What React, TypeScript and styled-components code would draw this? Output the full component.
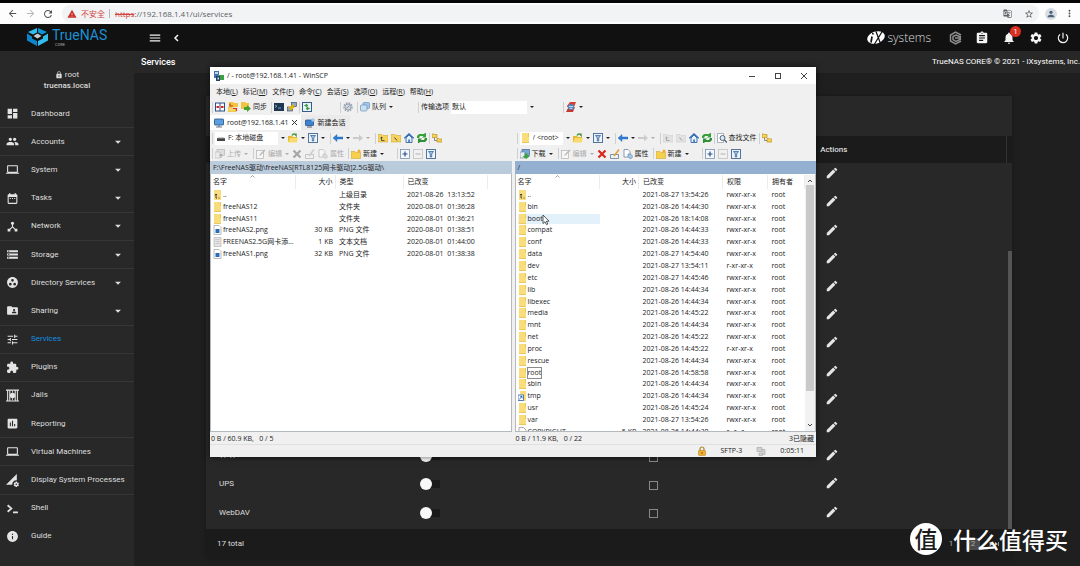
import React from "react";
import styled, { createGlobalStyle, css } from "styled-components";
import {
  MdArrowBack, MdArrowForward, MdRefresh, MdWarning, MdGTranslate, MdStarBorder, MdPerson, MdMoreVert,
  MdDashboard, MdPeople, MdLaptop, MdDateRange, MdDeviceHub, MdStorage, MdGroupWork, MdFolderShared,
  MdTune, MdExtension, MdAssessment, MdPermDataSetting, MdInfo, MdMenu, MdAssignment,
  MdNotifications, MdSettings, MdPowerSettingsNew, MdEdit, MdLock, MdArrowDropDown, MdPlayArrow, MdSkipNext,
} from "react-icons/md";

const ui = `"Open Sans", "Noto Sans CJK SC", sans-serif`;
const web = `Roboto, "Noto Sans CJK SC", sans-serif`;

const Global = createGlobalStyle`
  * { box-sizing: border-box; }
  body { margin: 0; background: #1f1f1f; font-family: ${web}; overflow: hidden; }
  button, input, select { font: inherit; color: inherit; margin: 0; padding: 0; border: 0; background: none; }
  svg { display: block; flex: none; }
  a { color: inherit; text-decoration: none; }
  table { border-collapse: collapse; border-spacing: 0; }
  td, th { padding: 0; font-weight: 400; text-align: left; }
`;

const App_ = styled.div`
  position: relative;
  display: flex;
  flex-direction: column;
  min-height: 100vh;
`;

/* ---------- browser bar ---------- */

const BrowserBar = styled.header`
  display: flex;
  align-items: center;
  gap: 6px;
  height: 24px;
  padding: 0 5px 0 6px;
  border-top: 3px solid #050505;
  background: #fdfdfd;
  color: #50555a;
`;
const NavButton = styled.button<{ $off?: boolean }>`
  display: flex;
  justify-content: center;
  width: 12px;
  color: ${(p) => (p.$off ? "#b4b7ba" : "#505458")};
`;
const AddressBar = styled.div`
  display: flex;
  align-items: center;
  flex: 1;
  gap: 4px;
  height: 17px;
  margin-left: 2px;
  padding: 0 5px;
  border-radius: 8px;
  background: #f1f3f4;
  font: 8px/12px ${ui};
  color: #5d6165;
`;
const Unsafe = styled.span`
  color: #d3453c;
`;
const Divider = styled.span`
  width: 1px;
  height: 9px;
  background: #b5b7b9;
`;
const Url = styled.span`
  flex: 1;
  margin-left: 1px;
  s { color: #d3453c; }
`;
const Profile = styled.button`
  display: flex;
  justify-content: center;
  align-items: center;
  width: 12px;
  height: 12px;
  border-radius: 6px;
  background: #d9dee5;
  color: #4b6078;
`;

/* ---------- TrueNAS shell ---------- */

const TopBar = styled.div`
  display: flex;
  align-items: center;
  justify-content: space-between;
  height: 27px;
  padding: 0 10px 0 27px;
  background: #111;
  color: #f4f4f4;
`;
const Cluster = styled.div<{ $gap: number }>`
  display: flex;
  align-items: center;
  gap: ${(p) => p.$gap}px;
`;
const Brand = styled.a`
  display: flex;
  gap: 4px;
  width: 114px;
  color: #1b90d2;
`;
const BrandText = styled.span`
  display: flex;
  flex-direction: column;
  font: 14px/15px ${web};
  small { font: 4px/4px ${web}; color: #aaa; padding-left: 3px; }
`;
const BarButton = styled.button`
  position: relative;
  display: flex;
  justify-content: center;
  width: 14px;
`;
const Badge = styled.span`
  position: absolute;
  top: -5px;
  right: -5px;
  width: 11px;
  border-radius: 6px;
  background: #dc2f24;
  font: 8px/11px ${web};
  text-align: center;
`;
const Vendor = styled.a`
  display: flex;
  align-items: center;
  gap: 2px;
  margin-right: 4px;
  font: 300 12px/14px "Open Sans", sans-serif;
  color: #ddd;
`;
const Body = styled.div`
  display: flex;
  flex: 1;
`;
const Sidebar = styled.aside`
  width: 134px;
  flex: none;
  background: #282828;
  color: #dcdcdc;
`;
const Account = styled.div`
  display: flex;
  flex-direction: column;
  align-items: center;
  height: 49px;
  padding-top: 18px;
  font: 8px/11px ${web};
  span { display: flex; align-items: center; gap: 2px; }
  b { font-weight: 500; }
`;
const Menu = styled.nav`
  display: flex;
  flex-direction: column;
  height: 451px;
`;
const MenuItem = styled.a<{ $active?: boolean; $line?: boolean }>`
  display: flex;
  flex: 1;
  align-items: center;
  padding: 0 9px 0 6px;
  border-bottom: 1px solid ${(p) => (p.$line ? "#363636" : "transparent")};
  font: 400 8px/10px ${web};
  color: ${(p) => (p.$active ? "#1190e0" : "#dedede")};
  > svg:first-child { width: 13px; height: 13px; margin-right: 12px; color: #e4e4e4; }
  > span { flex: 1; white-space: nowrap; }
`;
const Main = styled.main`
  flex: 1;
  min-width: 0;
  background: #1f1f1f;
  color: #dedede;
`;
const PageHead = styled.div`
  display: flex;
  align-items: center;
  justify-content: space-between;
  height: 22px;
  padding-left: 7px;
  background: #272727;
  font: 400 8px/12px ${web};
  color: #fff;
  h1 { margin: 0; font: 500 9px/12px ${web}; }
`;
const Card = styled.section`
  position: relative;
  margin: 23px 68px 8px 72px;
  padding-top: 40px;
  background: #282828;
  box-shadow: 0 0 4px #181818;
`;
const ServiceScroll = styled.div`
  height: 393px;
  overflow: hidden;
`;
const ServiceTable = styled.table`
  width: 100%;
  height: 390px;
  table-layout: fixed;
  font: 400 8px/12px ${web};
  thead th { height: 27px; background: #1b1b1b; font-weight: 500; }
  thead th:last-child { border-left: 1px solid #333; }
  tbody td { height: 28px; vertical-align: middle; }
  tbody tr:first-child td { height: 24px; }
  tbody tr:first-child td button { margin-bottom: 4px; }
  td:first-child { padding: 2px 0 0 13px; }
  td:nth-child(2) { padding-top: 2px; }
  td:nth-child(4) { padding-left: 5px; }
`;
const Toggle = styled.input`
  appearance: none;
  display: block;
  position: relative;
  width: 20px;
  height: 12px;
  background: linear-gradient(#1a1a1a, #1a1a1a) 6px 2px / 14px 8px no-repeat;
  &::before {
    content: "";
    display: block;
    width: 12px;
    height: 12px;
    border-radius: 6px;
    background: #f8f8f8;
  }
`;
const Check = styled.input`
  appearance: none;
  display: block;
  width: 9px;
  height: 9px;
  margin-top: 4px;
  border: 1px solid #888;
`;
const EditButton = styled.button`
  display: block;
  color: #e6e6e6;
`;
const ScrollThumb = styled.div`
  position: absolute;
  right: 0;
  top: 155px;
  bottom: 29px;
  width: 4px;
  background: #555;
`;
const CardFoot = styled.footer`
  display: flex;
  align-items: center;
  justify-content: space-between;
  height: 29px;
  padding: 0 12px 0 11px;
  background: #1b1b1b;
  font: 8px/12px ${web};
`;
const PageButton = styled.button<{ $on?: boolean }>`
  width: 14px;
  height: 12px;
  background: ${(p) => (p.$on ? "#4a4a4a" : "none")};
  color: #aaa;
`;
const StepButton = styled.button`
  display: flex;
  justify-content: center;
  width: 6px;
  color: #ccc;
`;

/* ---------- WinSCP window ---------- */

const Window = styled.section`
  position: absolute;
  left: 210px;
  top: 67px;
  width: 606px;
  background: #f0f0f0;
  box-shadow: 0 0 6px #0009;
  font: 7px/10px ${ui};
  color: #222;
`;
const TitleBar = styled.div`
  display: flex;
  align-items: center;
  gap: 3px;
  height: 17px;
  padding: 0 4px;
  background: #fff;
  span { flex: 1; }
`;
const SysButton = styled.button`
  display: flex;
  justify-content: center;
  width: 16px;
  margin-left: 7px;
`;
const MenuBar = styled.div`
  display: flex;
  align-items: center;
  gap: 5px;
  height: 15px;
  padding-left: 6px;
  button { white-space: nowrap; }
`;
const ToolRow = styled.div<{ $h: number }>`
  display: flex;
  align-items: center;
  height: ${(p) => p.$h}px;
`;
const Icons = styled.div`
  display: flex;
  align-items: center;
  gap: 3px;
`;
const Tool = styled.button<{ $off?: boolean }>`
  display: flex;
  align-items: center;
  gap: 2px;
  flex: none;
  white-space: nowrap;
  ${(p) => p.$off && css`color: #aaa; svg { filter: grayscale(1); opacity: 0.45; }`}
`;
const Caret = styled.button<{ $off?: boolean }>`
  display: flex;
  align-items: center;
  justify-content: center;
  width: 10px;
  height: 10px;
  flex: none;
  &::before {
    content: "";
    border: 2px solid transparent;
    border-top-color: ${(p) => (p.$off ? "#aaa" : "#222")};
    border-bottom: 0;
  }
`;
const Sep = styled.i`
  width: 1px;
  height: 11px;
  margin: 0 2px;
  flex: none;
  background: #cfcfcf;
`;
const Space = styled.i<{ $w: number }>`
  width: ${(p) => p.$w}px;
  flex: none;
`;
const Combo = styled.label<{ $w: number }>`
  display: flex;
  align-items: center;
  gap: 2px;
  width: ${(p) => p.$w}px;
  height: 13px;
  padding-left: 1px;
  background: #fff;
  select { appearance: none; flex: 1; min-width: 0; }
`;
const Tabs = styled.div`
  display: flex;
  align-items: stretch;
  height: 15px;
`;
const Tab = styled.button<{ $on?: boolean }>`
  display: flex;
  align-items: center;
  gap: 3px;
  padding: 0 4px;
  background: ${(p) => (p.$on ? "#fff" : "#ebebeb")};
`;
const Panes = styled.div`
  display: flex;
  gap: 3px;
`;
const Pane = styled.section`
  flex: 1;
  min-width: 0;
`;
const PathBar = styled.div<{ $on?: boolean }>`
  height: 13px;
  padding: 0 3px;
  background: ${(p) => (p.$on ? "#94b0d0" : "#bacbdc")};
  line-height: 13px;
  white-space: nowrap;
`;
const ListBox = styled.div`
  display: flex;
  height: 258px;
  padding-top: 1px;
  overflow: hidden;
  border: 1px solid #b4b9be;
  border-top: 0;
  background: #fff;
`;
const FileTable = styled.table<{ $h: number }>`
  width: 100%;
  height: ${(p) => p.$h}px;
  table-layout: fixed;
  white-space: pre;
  line-height: 10px;
  thead th { height: 14px; border-right: 1px solid #ececec; }
  tbody td { height: 11px; }
  th:first-child, td:first-child { padding-left: 2px; }
  th:nth-child(2), td:nth-child(2) { text-align: right; padding-right: 2px; }
  th:nth-child(n + 3), td:nth-child(n + 3) { padding-left: 4px; }
`;
const SortHead = styled.th`
  position: relative;
  svg { position: absolute; left: 39px; top: 0; }
`;
const FileName = styled.span<{ $hot?: boolean }>`
  display: flex;
  align-items: center;
  background: ${(p) => (p.$hot ? "#e3f1fb" : "none")};
`;
const Label = styled.span<{ $focus?: boolean }>`
  outline: ${(p) => (p.$focus ? "1px solid #8a8a8a" : "none")};
`;
const PaneScroll = styled.div`
  display: flex;
  flex-direction: column;
  align-items: center;
  width: 10px;
  padding: 4px 1px;
  background: #f2f2f2;
  flex: none;
  i { width: 8px; height: 206px; margin: 2px 0 auto; background: #c9c9c9; }
`;
const StatusLine = styled.div`
  display: flex;
  justify-content: space-between;
  height: 12px;
  padding: 0 2px 0 1px;
  line-height: 13px;
  white-space: pre;
`;
const StatusBar = styled.footer`
  display: flex;
  align-items: center;
  justify-content: flex-end;
  height: 13px;
  padding-right: 12px;
  border-top: 1px solid #e0e0e0;
  gap: 14px;
`;
const Pointer = styled.svg`
  position: absolute;
  left: 332px;
  top: 147px;
`;
const Watermark = styled.div`
  position: absolute;
  right: 12px;
  bottom: 11px;
  display: flex;
  align-items: center;
  gap: 11px;
  color: #fff;
  font: 500 23px/32px "Noto Sans CJK SC", sans-serif;
  b {
    width: 32px;
    height: 32px;
    border-radius: 16px;
    background: #fff;
    color: #1c1c1c;
    font-size: 23px;
    font-weight: 500;
    line-height: 31px;
    text-align: center;
  }
`;

/* ---------- drawings ---------- */

const shapes: Record<string, React.ReactNode> = {
  panes: <><rect x="0.5" y="1" width="9" height="8" fill="#fff" stroke="#2b4f8c" /><path d="M5 1v8" stroke="#2b4f8c" /><path d="M1.5 5h2.5M6 5h2.5" stroke="#d22" strokeWidth="2" /></>,
  folderSync: <><path d="M1 0h4l1 1h4v4H1z" fill="#f2c63c" /><path d="M0 5h3l1 1h4v4H0z" fill="#f8d662" stroke="#c59a20" strokeWidth=".4" /><path d="M5 4H2V1.500M5 6.500h3.500V9" stroke="#d43a22" strokeWidth="1.200" fill="none" /></>,
  folderGreen: <><path d="M0 0h4l1 1h3v6H0z" fill="#f2c63c" /><path d="M3 5h3V3l4 3.500L6 10V8H3z" fill="#46a036" /></>,
  terminal: <><rect x="0" y="1" width="10" height="8" fill="#1f3550" /><path d="M1 3l2 1.200L1 5.500M4 6h3" stroke="#8fc2ea" fill="none" strokeWidth=".8" /></>,
  putty: <><rect x="4.500" y="0.500" width="5" height="4" fill="#8ea6c0" stroke="#345" strokeWidth=".6" /><rect x=".5" y="5" width="5" height="4" fill="#8ea6c0" stroke="#345" strokeWidth=".6" /><path d="M7 3L3 5.500h3L3 8" stroke="#e8b800" fill="none" strokeWidth="1.600" /></>,
  compare: <><rect x=".5" y=".5" width="9" height="9" fill="#e8f2fa" stroke="#345c8c" /><path d="M2 3.500h2M4 2l2 1.500L4 5zM8 6.500H6M6 5L4 6.500 6 8z" stroke="#3a9a3a" strokeWidth=".8" fill="#3a9a3a" /></>,
  gear: <><circle cx="5" cy="5" r="4" fill="none" stroke="#9aa6b4" strokeWidth="1.600" strokeDasharray="1.600 1.100" /><circle cx="5" cy="5" r="3" fill="#d4dae2" stroke="#8492a4" strokeWidth=".8" /><path d="M3.500 6.500l3-3" stroke="#8492a4" /></>,
  stack: <><rect x="3" y=".5" width="6.500" height="6" rx="1" fill="#a0c6e8" stroke="#6a94bc" strokeWidth=".7" /><rect x=".5" y="3" width="6.500" height="6" rx="1" fill="#c8dff2" stroke="#6a94bc" strokeWidth=".7" /></>,
  transfer: <><path d="M1 4l3-4h6L8 5H1z" fill="#d43f32" /><path d="M9 5L7 10H0l2-4z" fill="#c43a30" /><circle cx="5" cy="5" r="3" fill="#4a86c4" /><path d="M3 4.500h4M3.500 6.300h3" stroke="#e8eef4" strokeWidth=".8" /></>,
  monitor: <><rect x=".5" y="1" width="9" height="6" rx=".6" fill="#5a9ee4" stroke="#28507e" strokeWidth=".8" /><path d="M2 9h6M5 7v2" stroke="#68788a" strokeWidth="1.200" /></>,
  monitorNew: <><rect x=".5" y="2" width="8" height="5.500" rx=".6" fill="#3b82d0" stroke="#28507e" strokeWidth=".8" /><path d="M2 9h5" stroke="#68788a" strokeWidth="1.200" /><circle cx="8" cy="2" r="1.800" fill="#9cc8ee" /></>,
  drive: <><path d="M1 5h8v3H1z" fill="#444" /><path d="M2 4.500h6l1 1H1z" fill="#999" /></>,
  folderOpen: <><path d="M0 3h4l1 1h4v5H0z" fill="#e8b832" /><path d="M2 5h8L8.500 9.500H0z" fill="#f9da6c" /><path d="M4 2.500C5 .5 7 .5 8 2V.5M8 2v1" stroke="#4a9a3a" strokeWidth="1.500" fill="none" /></>,
  filter: <><rect x=".5" y=".5" width="9" height="9" fill="#eef4fa" stroke="#54749c" /><path d="M2.500 2.500h5L5.700 5v3H4.300V5z" fill="#9cc0e4" stroke="#2c5a94" strokeWidth=".7" /></>,
  back: <path d="M0 5l4-3.500V4h6v2H4v2.500z" fill="#2f7fd6" stroke="#1a5cab" strokeWidth=".4" />,
  forward: <path d="M10 5L6 1.500V4H0v2h6v2.500z" fill="#8aa4c0" />,
  folderUp: <><path d="M0 1.500h4l1 1h5V9H0z" fill="#f6d35c" stroke="#c39a28" strokeWidth=".5" /><path d="M6.500 7.500h-3V4M2.300 5.200L3.500 4 4.700 5.200" stroke="#334" strokeWidth=".8" fill="none" /></>,
  folderRoot: <><path d="M0 1.500h4l1 1h5V9H0z" fill="#f6d35c" stroke="#c39a28" strokeWidth=".5" /><path d="M3.500 4.500L6 7.500" stroke="#334" strokeWidth=".9" /></>,
  home: <><path d="M2 5v4.500h6V5L5 2z" fill="#e4f0fa" stroke="#3568a8" strokeWidth=".9" /><path d="M.3 5.300L5 .8l4.700 4.500" stroke="#2c66b4" strokeWidth="1.200" fill="none" /><path d="M4.300 6.500h1.500v3H4.300z" fill="#3568a8" /></>,
  refresh: <><path d="M0 5V3l2-2h5l1-1h1v4.500H5L6.500 3H3L2 5z" fill="#3aa23a" /><path d="M10 5v2L8 9H3l-1 1H1V5.500h4L3.500 7H7l1-2z" fill="#2f8f34" /></>,
  tree: <><path d="M0 1h2l.5.500H5V4.500H0zM5 5.500h2l.5.500H10V9H5z" fill="#f6d35c" stroke="#c39a28" strokeWidth=".8" /><path d="M2.500 5v2.500H5" stroke="#888" fill="none" /></>,
  upload: <><rect x="2" y=".5" width="7.500" height="6" fill="#b8cce0" stroke="#5878a0" strokeWidth=".7" /><path d="M0 3h5v6H0z" fill="#dce6f0" stroke="#5878a0" strokeWidth=".6" /><path d="M6 5v4M4.500 7l1.500-2 1.500 2" stroke="#555" fill="none" /></>,
  download: <><rect x="2" y=".5" width="7.500" height="6" fill="#7aa6d4" stroke="#406898" strokeWidth=".7" /><path d="M0 3h5v6H0z" fill="#e8eef4" stroke="#5878a0" strokeWidth=".6" /><path d="M4.500 4.500h3V7H10L6.200 10 2.500 7h2z" fill="#3aa23a" /></>,
  edit: <><rect x=".5" y="1.500" width="7" height="8" fill="#fff" stroke="#667" strokeWidth=".7" /><path d="M3 7l1-2 4.500-4.500 1 1L5 6z" fill="#777" /></>,
  cross: <path d="M1.500 1.500l7 7M8.500 1.500l-7 7" stroke="#d8281c" strokeWidth="2.200" />,
  rename: <><path d="M.5 5.500h8v4h-8z" fill="#eef2f6" stroke="#667c94" strokeWidth=".8" /><path d="M4 7l5-6.500" stroke="#e0a030" strokeWidth="1.500" /></>,
  props: <><path d="M1 .5h4L7 2.500V8H1z" fill="#fff" stroke="#6b84a4" strokeWidth=".8" /><path d="M5 5h2.500L10 7.500 7.500 10 5 7.500z" fill="#a8c8e4" stroke="#4878a8" strokeWidth=".6" /></>,
  newFolder: <><path d="M0 2.500h4l1 1h4.500V9.500H0z" fill="#f6cf4c" stroke="#c39a28" strokeWidth=".5" /><circle cx="8" cy="2" r="1.600" fill="#f8a830" /></>,
  plus: <><rect x=".5" y=".5" width="9" height="9" fill="#f4f8fc" stroke="#7890ac" strokeWidth=".8" /><path d="M5 2.500v5M2.500 5h5" stroke="#28508c" strokeWidth="1.200" /></>,
  minus: <><rect x=".5" y=".5" width="9" height="9" fill="#f4f4f4" stroke="#888" strokeWidth=".8" /><path d="M2.500 5h5" stroke="#666" /></>,
  find: <><path d="M.5.500h6v9h-6z" fill="#fff" stroke="#8894a4" strokeWidth=".7" /><circle cx="5.500" cy="5" r="2.500" fill="#d8e8f6" stroke="#456" strokeWidth=".9" /><path d="M7.500 7L10 9.500" stroke="#456" strokeWidth="1.200" /></>,
  folder: <><path d="M1 0h7v10H1z" fill="#f9dc7c" /><path d="M7 0h1v4H7zM1 9h7v1H1z" fill="#ecc75c" /></>,
  parent: <><path d="M1 0h7v10H1z" fill="#f9dc7c" /><path d="M3 4v4h1M2 5.200L3 4l1 1.200M5.500 8h1" stroke="#333" strokeWidth=".9" fill="none" /></>,
  link: <><path d="M2 0h6v10H2z" fill="#f9dc7c" /><rect x="0" y="4" width="5.500" height="5.500" fill="#fff" stroke="#2463b4" strokeWidth=".8" /><path d="M1.200 8.300L4 5.500M2.300 5.500H4v1.800" stroke="#2463b4" strokeWidth=".9" fill="none" /></>,
  image: <><path d="M1 .5h5L8 2.500v7H1z" fill="#fff" stroke="#8a9098" strokeWidth=".6" /><rect x="2.500" y="4" width="4" height="4" fill="#2b6cb8" /></>,
  text: <><path d="M1 .5h7v9H1z" fill="#e4e4e4" stroke="#aaa" strokeWidth=".6" /><path d="M2.500 2.500h4M2.500 4.500h4M2.500 6.500h4" stroke="#bbb" strokeWidth=".7" /></>,
  file: <path d="M1 .5h4.500L8 3v7H1z" fill="#fff" stroke="#888" strokeWidth=".7" />,
  winscp: <><rect x="0" y="0" width="5" height="7" fill="#4472a8" /><rect x="1" y="1" width="3" height="2" fill="#bcd8f0" /><rect x="4" y="4" width="6" height="5" fill="#3da046" /><path d="M2 5h4v5H2z" fill="#23406c" /><path d="M3.500 6.500h1.500v2H3.500z" fill="#dde" /></>,
  lock: <><path d="M3 5V3a2 2 0 014 0v2" stroke="#a88428" fill="none" strokeWidth="1.200" /><rect x="1.500" y="4.500" width="7" height="5" rx=".8" fill="#f0b030" stroke="#b07c10" strokeWidth=".5" /><circle cx="5" cy="7" r=".8" fill="#7a5408" /></>,
  zip: <path d="M1 1.500h5v4H1zM5 3.500h4v5H6.500M3 7h3.500v2.500H3z" fill="#d0d0d0" stroke="#aaa" strokeWidth=".7" />,
};
const Ico = ({ n }: { n: string }) => (
  <svg width="10" height="10" viewBox="0 0 10 10" aria-hidden="true">{shapes[n]}</svg>
);

const TrueNasMark = () => (
  <svg width="21" height="18" viewBox="0 0 42 36" aria-hidden="true">
    <path d="M20 0v9l-8 4L2 8z" fill="#31beec" />
    <path d="M22 0v9l8 4 10-5z" fill="#0d95d5" />
    <path d="M21 11l8 5-8 5-8-5z" fill="#c9cdd0" />
    <path d="M0 11l10 6v4l10 5v10L0 25z" fill="#0d85cb" />
    <path d="M42 11l-10 6v4l-10 5v10l20-11z" fill="#31beec" />
  </svg>
);
const IxMark = () => (
  <svg width="19" height="15" viewBox="0 0 38 30" aria-hidden="true">
    <ellipse cx="18" cy="15" rx="18" ry="12" fill="#fff" transform="rotate(-18 18 15)" />
    <path d="M10 13l-2 12M12 6l-.5 3" stroke="#111" strokeWidth="3.500" />
    <path d="M18 3l9 24M31 2L15 28" stroke="#111" strokeWidth="2.500" />
  </svg>
);
const TrueCommandMark = () => (
  <svg width="13" height="14" viewBox="0 0 26 28" fill="none" stroke="#8d8d8d" strokeWidth="3" aria-hidden="true">
    <path d="M24 8L13 2 3 8v12l10 6 11-6" />
    <path d="M24 12l-10-4-6 3v6l6 4 10-5M12 14h12" />
  </svg>
);
const JailIcon = () => (
  <svg viewBox="0 0 24 24" aria-hidden="true">
    <path d="M0 2h24M0 22h24M3 2v20M21 2v20M7 3v18M17 3v18" stroke="#e4e4e4" strokeWidth="2" />
    <circle cx="12" cy="12" r="5" fill="#e4e4e4" />
    <path d="M12 3v4M12 17v4" stroke="#e4e4e4" strokeWidth="1.500" />
  </svg>
);
const ShellIcon = () => (
  <svg viewBox="0 0 24 24" fill="none" stroke="#e4e4e4" strokeWidth="3.200" aria-hidden="true">
    <path d="M3 6l7 6-7 6M13 19h9" />
  </svg>
);

/* ---------- data ---------- */

const menu: { name: string; icon: React.ReactNode; sub?: boolean; line?: boolean }[] = [
  { name: "Dashboard", icon: <MdDashboard />, line: true },
  { name: "Accounts", icon: <MdPeople />, sub: true, line: true },
  { name: "System", icon: <MdLaptop />, sub: true },
  { name: "Tasks", icon: <MdDateRange />, sub: true, line: true },
  { name: "Network", icon: <MdDeviceHub />, sub: true, line: true },
  { name: "Storage", icon: <MdStorage />, sub: true, line: true },
  { name: "Directory Services", icon: <MdGroupWork />, sub: true },
  { name: "Sharing", icon: <MdFolderShared />, sub: true, line: true },
  { name: "Services", icon: <MdTune />, line: true },
  { name: "Plugins", icon: <MdExtension />, line: true },
  { name: "Jails", icon: <JailIcon /> },
  { name: "Reporting", icon: <MdAssessment />, line: true },
  { name: "Virtual Machines", icon: <MdLaptop />, line: true },
  { name: "Display System Processes", icon: <MdPermDataSetting />, line: true },
  { name: "Shell", icon: <ShellIcon /> },
  { name: "Guide", icon: <MdInfo /> },
];

const services = [...Array(10).fill(""), "TFTP", "UPS", "WebDAV"];

const localFiles = [
  ["parent", "..", "", "上级目录", "2021-08-26  13:13:52"],
  ["folder", "freeNAS12", "", "文件夹", "2020-08-01  01:36:28"],
  ["folder", "freeNAS11", "", "文件夹", "2020-08-01  01:36:21"],
  ["image", "freeNAS2.png", "30 KB", "PNG 文件", "2020-08-01  01:38:51"],
  ["text", "FREENAS2.5G网卡添...", "1 KB", "文本文档", "2020-08-01  01:44:00"],
  ["image", "freeNAS1.png", "32 KB", "PNG 文件", "2020-08-01  01:38:38"],
];

const rx = "rwxr-xr-x";
const remoteFiles = [
  ["parent", "..", "", "2021-08-27 13:54:26", rx],
  ["folder", "bin", "", "2021-08-26 14:44:30", rx],
  ["folder", "boot", "", "2021-08-26 18:14:08", rx],
  ["folder", "compat", "", "2021-08-26 14:44:33", rx],
  ["folder", "conf", "", "2021-08-26 14:44:33", rx],
  ["folder", "data", "", "2021-08-27 14:54:40", rx],
  ["folder", "dev", "", "2021-08-27 13:54:11", "r-xr-xr-x"],
  ["folder", "etc", "", "2021-08-27 14:45:46", rx],
  ["folder", "lib", "", "2021-08-26 14:44:34", rx],
  ["folder", "libexec", "", "2021-08-26 14:44:34", rx],
  ["folder", "media", "", "2021-08-26 14:45:22", rx],
  ["folder", "mnt", "", "2021-08-26 14:44:34", rx],
  ["folder", "net", "", "2021-08-26 14:45:22", rx],
  ["folder", "proc", "", "2021-08-26 14:45:22", "r-xr-xr-x"],
  ["folder", "rescue", "", "2021-08-26 14:44:34", rx],
  ["folder", "root", "", "2021-08-26 14:58:58", rx],
  ["folder", "sbin", "", "2021-08-26 14:44:34", rx],
  ["link", "tmp", "", "2021-08-26 14:44:34", rx],
  ["folder", "usr", "", "2021-08-26 14:45:24", rx],
  ["folder", "var", "", "2021-08-27 13:54:26", rx],
  ["file", "COPYRIGHT", "5 KB", "2021-08-26 14:44:30", "r--r--r--"],
];

const menus: [string, string][] = [
  ["本地", "L"], ["标记", "M"], ["文件", "F"], ["命令", "C"], ["会话", "S"], ["选项", "O"], ["远程", "R"], ["帮助", "H"],
];

const IconTool = ({ n, off, label }: { n: string; off?: boolean; label: string }) => (
  <Tool $off={off} aria-label={label}><Ico n={n} /></Tool>
);

const PaneTools = ({ remote }: { remote?: boolean }) => (
  <>
    <ToolRow $h={16}>
      <Sep />
      <Combo $w={remote ? 43 : 63}>
        <Ico n={remote ? "folder" : "drive"} />
        <select aria-label="目录">
          <option>{remote ? "/ <root>" : "F: 本地磁盘"}</option>
        </select>
      </Combo>
      <Caret aria-label="目录列表" />
      <IconTool n="folderOpen" label="打开目录" />
      <Caret aria-label="书签" />
      <IconTool n="filter" label="过滤" />
      <Caret aria-label="过滤选项" />
      <Sep />
      <IconTool n="back" label="后退" />
      <Caret aria-label="后退历史" />
      <IconTool n="forward" off label="前进" />
      <Caret $off aria-label="前进历史" />
      <Sep />
      <Icons>
        <IconTool n="folderUp" off={remote} label="上级目录" />
        <IconTool n="folderRoot" off={remote} label="根目录" />
        <IconTool n="home" label="主目录" />
        <IconTool n="refresh" label="刷新" />
      </Icons>
      <Sep />
      {remote && <><Tool><Ico n="find" />查找文件</Tool><Sep /></>}
      <IconTool n="tree" label="目录树" />
    </ToolRow>
    <ToolRow $h={15}>
      <Sep />
      <Tool $off={!remote}><Ico n={remote ? "download" : "upload"} />{remote ? "下载" : "上传"}</Tool>
      <Caret $off={!remote} aria-label="传输选项" />
      <Sep />
      <Tool $off><Ico n="edit" />编辑</Tool>
      <Caret $off aria-label="编辑选项" />
      <Icons>
        <IconTool n="cross" off={!remote} label="删除" />
        <IconTool n="rename" off={!remote} label="重命名" />
        <Tool $off={!remote}><Ico n="props" />属性</Tool>
      </Icons>
      <Space $w={2} />
      <Sep />
      <Tool><Ico n="newFolder" />新建</Tool>
      <Caret aria-label="新建选项" />
      <Space $w={8} />
      <Sep />
      <Icons>
        <IconTool n="plus" label="选择" />
        <IconTool n="minus" off label="取消选择" />
        <IconTool n="filter" label="筛选" />
      </Icons>
    </ToolRow>
  </>
);

const SortMark = () => (
  <svg width="5" height="3" viewBox="0 0 5 3" fill="none" stroke="#888" strokeWidth=".8" aria-hidden="true"><path d="M.5 2.500l2-2 2 2" /></svg>
);

const Explorer = () => (
  <Window>
    <TitleBar>
      <Ico n="winscp" />
      <span>/ - root@192.168.1.41 - WinSCP</span>
      <SysButton aria-label="最小化"><svg width="8" height="8" stroke="#444"><path d="M1 4.500h6" /></svg></SysButton>
      <SysButton aria-label="最大化"><svg width="8" height="8" stroke="#444" fill="none"><rect x="1.500" y="1.500" width="5" height="5" /></svg></SysButton>
      <SysButton aria-label="关闭"><svg width="8" height="8" stroke="#444"><path d="M1 1l6 6M7 1l-6 6" /></svg></SysButton>
    </TitleBar>
    <MenuBar>
      {menus.map(([t, k]) => <button key={k}>{t}(<u>{k}</u>)</button>)}
    </MenuBar>
    <ToolRow $h={16}>
      <Sep />
      <Icons>
        <IconTool n="panes" label="布局" />
        <IconTool n="folderSync" label="比较目录" />
        <Tool><Ico n="folderGreen" />同步</Tool>
      </Icons>
      <Space $w={2} />
      <Sep />
      <Icons>
        <IconTool n="terminal" label="控制台" />
        <IconTool n="putty" label="PuTTY" />
      </Icons>
      <Sep />
      <IconTool n="compare" label="同步浏览" />
      <Space $w={26} />
      <Sep />
      <IconTool n="gear" label="选项" />
      <Space $w={2} />
      <Sep />
      <Tool><Ico n="stack" />队列</Tool>
      <Caret aria-label="队列选项" />
      <Space $w={20} />
      <Sep />
      <label htmlFor="preset">传输选项</label>
      <Space $w={2} />
      <Combo $w={76}>
        <select id="preset"><option>默认</option></select>
      </Combo>
      <Caret aria-label="默认选项" />
      <Space $w={24} />
      <Sep />
      <IconTool n="transfer" label="传输" />
      <Caret aria-label="传输列表" />
    </ToolRow>
    <Tabs>
      <Tab $on><Ico n="monitor" />root@192.168.1.41
        <svg width="5" height="5" stroke="#333"><path d="M0 0l5 5M5 0L0 5" /></svg>
      </Tab>
      <Tab><Ico n="monitorNew" />新建会话</Tab>
    </Tabs>
    <Panes>
      <Pane>
        <PaneTools />
        <PathBar>F:\FreeNAS驱动\freeNAS[RTL8125网卡驱动]2.5G驱动\</PathBar>
        <ListBox>
          <FileTable $h={85}>
            <colgroup>
              <col width="84" /><col width="40" /><col width="68" /><col width="84" /><col />
            </colgroup>
            <thead><tr><SortHead>名字<SortMark /></SortHead><th>大小</th><th>类型</th><th>已改变</th><td /></tr></thead>
            <tbody>
              {localFiles.map(([icon, name, size, type, date]) => (
                <tr key={name}>
                  <td><FileName><Ico n={icon} /><Label>{name}</Label></FileName></td>
                  <td>{size}</td><td>{type}</td><td>{date}</td><td />
                </tr>
              ))}
            </tbody>
          </FileTable>
        </ListBox>
        <StatusLine>{"0 B / 60.9 KB,   0 / 5"}</StatusLine>
      </Pane>
      <Pane>
        <PaneTools remote />
        <PathBar $on>/</PathBar>
        <ListBox>
          <FileTable $h={263}>
            <colgroup>
              <col width="84" /><col width="39" /><col width="84" /><col width="45" /><col />
            </colgroup>
            <thead><tr><SortHead>名字<SortMark /></SortHead><th>大小</th><th>已改变</th><th>权限</th><th>拥有者</th></tr></thead>
            <tbody>
              {remoteFiles.map(([icon, name, size, date, mode]) => (
                <tr key={name}>
                  <td><FileName $hot={name === "boot"}><Ico n={icon} /><Label $focus={name === "root"}>{name}</Label></FileName></td>
                  <td>{size}</td><td>{date}</td><td>{mode}</td><td>root</td>
                </tr>
              ))}
            </tbody>
          </FileTable>
          <PaneScroll>
            <svg width="6" height="4" fill="none" stroke="#444"><path d="M1 3l2-2 2 2" /></svg>
            <i />
            <svg width="6" height="4" fill="none" stroke="#444"><path d="M1 1l2 2 2-2" /></svg>
          </PaneScroll>
        </ListBox>
        <StatusLine><span>{"0 B / 11.9 KB,   0 / 22"}</span><span>3已隐藏</span></StatusLine>
      </Pane>
    </Panes>
    <StatusBar>
      <Ico n="lock" /><span>SFTP-3</span><Ico n="zip" /><span>0:05:11</span>
    </StatusBar>
    <Pointer width="8" height="12" viewBox="0 0 8 12" fill="#fff" stroke="#333" strokeWidth=".8" aria-hidden="true">
      <path d="M1 1v8.500l2-1.800 1.500 3 1.300-.6-1.400-2.900H7z" />
    </Pointer>
  </Window>
);

export default function App() {
  return (
    <App_>
      <Global />
      <BrowserBar>
        <NavButton aria-label="后退"><MdArrowBack size={11} /></NavButton>
        <NavButton $off aria-label="前进"><MdArrowForward size={11} /></NavButton>
        <NavButton aria-label="刷新"><MdRefresh size={12} /></NavButton>
        <AddressBar>
          <MdWarning size={10} color="#c8342b" />
          <Unsafe>不安全</Unsafe>
          <Divider />
          <Url><s>https</s>://192.168.1.41/ui/services</Url>
          <MdGTranslate size={9} />
          <Space $w={4} />
          <MdStarBorder size={10} />
        </AddressBar>
        <Profile aria-label="用户"><MdPerson size={10} /></Profile>
        <NavButton aria-label="菜单"><MdMoreVert size={11} /></NavButton>
      </BrowserBar>
      <TopBar>
        <Cluster $gap={7}>
          <Brand href="#">
            <TrueNasMark />
            <BrandText>TrueNAS<small>CORE</small></BrandText>
          </Brand>
          <BarButton aria-label="菜单"><MdMenu size={14} /></BarButton>
          <BarButton aria-label="收起">
            <svg width="8" height="8" viewBox="0 0 8 8" fill="none" stroke="currentColor" strokeWidth="1.500"><path d="M6 1L3 4l3 3" /></svg>
          </BarButton>
        </Cluster>
        <Cluster $gap={13}>
          <Vendor href="#"><IxMark />systems</Vendor>
          <BarButton aria-label="TrueCommand"><TrueCommandMark /></BarButton>
          <BarButton aria-label="任务"><MdAssignment size={14} /></BarButton>
          <BarButton aria-label="通知"><MdNotifications size={14} /><Badge>1</Badge></BarButton>
          <BarButton aria-label="设置"><MdSettings size={14} /></BarButton>
          <BarButton aria-label="电源"><MdPowerSettingsNew size={14} /></BarButton>
        </Cluster>
      </TopBar>
      <Body>
        <Sidebar>
          <Account>
            <span><MdLock size={8} />root</span>
            <b>truenas.local</b>
          </Account>
          <Menu>
            {menu.map((m) => (
              <MenuItem key={m.name} href="#" $line={m.line} $active={m.name === "Services"}>
                {m.icon}<span>{m.name}</span>{m.sub && <MdArrowDropDown size={14} />}
              </MenuItem>
            ))}
          </Menu>
        </Sidebar>
        <Main>
          <PageHead><h1>Services</h1><span>TrueNAS CORE® © 2021 - iXsystems, Inc.</span></PageHead>
          <Card>
            <ServiceScroll>
              <ServiceTable>
                <colgroup>
                  <col width="26.5%" /><col width="28.5%" /><col width="21.2%" /><col /><col width="6" />
                </colgroup>
                <thead><tr><th /><th /><th /><th>Actions</th><th /></tr></thead>
                <tbody>
                  {services.map((name, i) => (
                    <tr key={i}>
                      <td>{name}</td>
                      <td><Toggle type="checkbox" aria-label="Running" /></td>
                      <td><Check type="checkbox" aria-label="Start Automatically" /></td>
                      <td><EditButton aria-label="Edit"><MdEdit size={14} /></EditButton></td>
                      <td />
                    </tr>
                  ))}
                </tbody>
              </ServiceTable>
            </ServiceScroll>
            <ScrollThumb />
            <CardFoot>
              <span>17 total</span>
              <Cluster $gap={8}>
                <PageButton>1</PageButton>
                <PageButton $on>2</PageButton>
                <Cluster $gap={0}>
                  <StepButton aria-label="Next page"><MdPlayArrow size={8} /></StepButton>
                  <StepButton aria-label="Last page"><MdSkipNext size={8} /></StepButton>
                </Cluster>
              </Cluster>
            </CardFoot>
          </Card>
        </Main>
      </Body>
      <Explorer />
      <Watermark><b>值</b>什么值得买</Watermark>
    </App_>
  );
}
